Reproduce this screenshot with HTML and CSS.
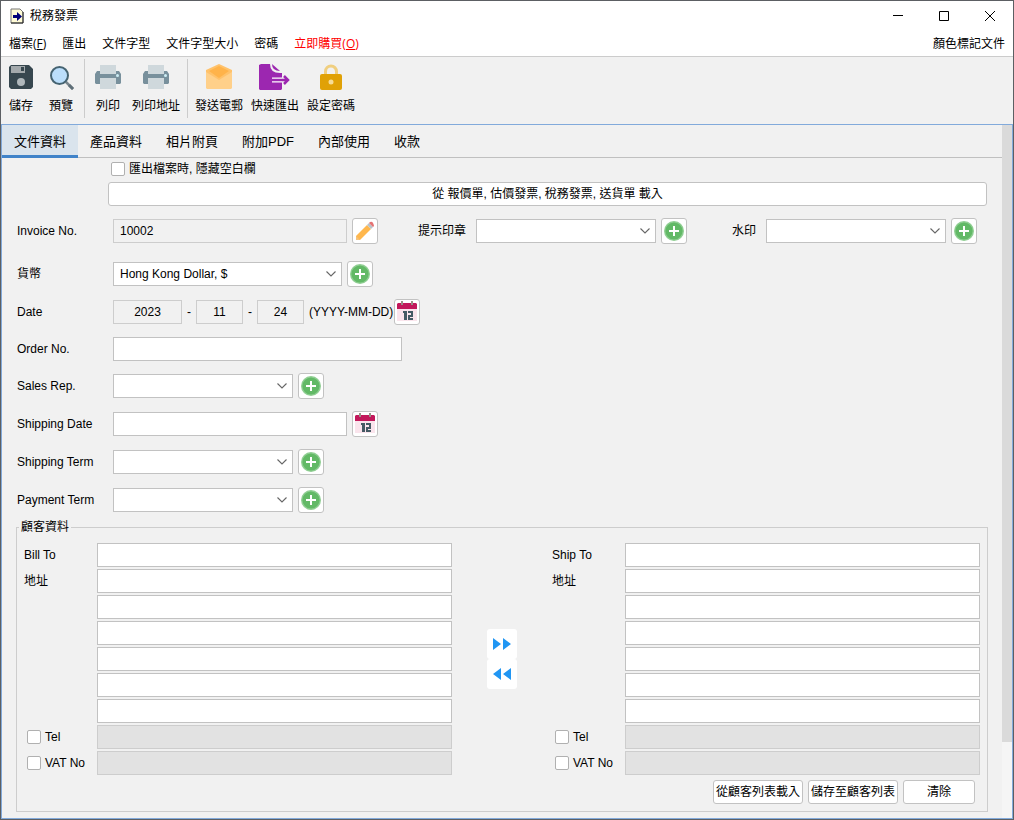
FILE: index.html
```html
<!DOCTYPE html>
<html lang="zh-Hant">
<head>
<meta charset="utf-8">
<title>稅務發票</title>
<link rel="stylesheet" href="styles.css">
</head>
<body>
<svg class="symbols" aria-hidden="true">
  <symbol id="plus" viewBox="0 0 22 22">
    <circle cx="11" cy="11" r="10" fill="#8fce92"/>
    <circle cx="11" cy="11" r="8.6" fill="#62b966"/>
    <path d="M11 6v10M6 11h10" stroke="#fff" stroke-width="2"/>
  </symbol>
  <symbol id="chevron" viewBox="0 0 12 8">
    <path d="M1.5 1.5 6 6l4.500-4.500" fill="none" stroke="#666" stroke-width="1.100"/>
  </symbol>
  <symbol id="calendar" viewBox="0 0 22 22">
    <path d="M1 7h20v13H1z" fill="#fae4ec"/>
    <path d="M2 2h18l1 1v5H1V3z" fill="#c2185b"/>
    <path d="M5 0h2v4H5zM15 0h2v4h-2z" fill="#9a9189"/>
    <path d="M7 10h4v9H8v-7H7zM12 10h5v6h-3v1h3v2h-5v-5h3v-2h-3z" fill="#455a64"/>
  </symbol>
  <symbol id="printer" viewBox="0 0 28 28">
    <path d="M6 2h16v9H6z" fill="#cfd8dc"/>
    <path d="M3 8h3v3h16V8h3l2 3v9l-1 1H2l-1-1v-9z" fill="#78909c"/>
    <path d="M6 15h16v11H6z" fill="#cfd8dc"/>
    <circle cx="23.500" cy="12.500" r="1.500" fill="#cdeef5"/>
  </symbol>
</svg>

<div class="window">
  <header class="titlebar">
    <svg class="app-icon" viewBox="0 0 14 16" aria-hidden="true">
      <path d="M1 1h9l3 3v11H1z" fill="#fffbd6" stroke="#777" stroke-width="1"/>
      <path d="M13 4v11H1" fill="none" stroke="#222" stroke-width="1"/>
      <path d="M3 7h4V4l5 4.500L7 13v-3H3z" fill="#00007a"/>
    </svg>
    <h1 class="title">稅務發票</h1>
    <div class="controls">
      <button class="control" aria-label="最小化"><svg viewBox="0 0 12 12"><path d="M1 5.500h10"/></svg></button>
      <button class="control" aria-label="最大化"><svg viewBox="0 0 12 12"><path d="M1.500 1.500h9v9h-9z"/></svg></button>
      <button class="control" aria-label="關閉"><svg viewBox="0 0 12 12"><path d="M1 1l10 10M11 1 1 11"/></svg></button>
    </div>
  </header>

  <nav class="menubar">
    <button class="menu">檔案(<u>F</u>)</button>
    <button class="menu">匯出</button>
    <button class="menu">文件字型</button>
    <button class="menu">文件字型大小</button>
    <button class="menu">密碼</button>
    <button class="menu menu-buy">立即購買(<u>O</u>)</button>
    <button class="menu menu-end">顏色標記文件</button>
  </nav>

  <div class="toolbar">
    <div class="tools tools-file">
      <button class="tool"><svg viewBox="0 0 28 28" aria-hidden="true"><path d="M4 2h18l4 4v18l-2 2H4l-2-2V4z" fill="#37474f"/><path d="M4 3h14v7H4z" fill="#a3a9ac"/><path d="M14 4h3v4h-3z" fill="#37474f"/><circle cx="14" cy="19" r="4" fill="#b0b8bc"/></svg>儲存</button>
      <button class="tool"><svg viewBox="0 0 28 28" aria-hidden="true"><path d="m19 19 7 7" stroke="#78858c" stroke-width="2.500"/><path d="m22 22 4 4" stroke="#5f6f78" stroke-width="3"/><circle cx="12.500" cy="12.500" r="8.500" fill="#bbdefb" stroke="#456371" stroke-width="2"/></svg>預覽</button>
    </div>
    <div class="tools tools-print">
      <button class="tool"><svg aria-hidden="true"><use href="#printer"/></svg>列印</button>
      <button class="tool"><svg aria-hidden="true"><use href="#printer"/></svg>列印地址</button>
    </div>
    <div class="tools tools-send">
      <button class="tool"><svg viewBox="0 0 28 28" aria-hidden="true"><path d="M1 8h26v17l-1 1H2l-1-1z" fill="#ffd08a"/><path d="M1 7 14 1l13 6v2l-13 8L1 9z" fill="#ffc26b"/><path d="M4 8 14 3l10 5-10 7z" fill="#ffb34a"/></svg>發送電郵</button>
      <button class="tool"><svg class="wide" viewBox="0 0 32 28" aria-hidden="true"><path d="M2 1h9q0 9 10 9h2v16l-1 1H1l-1-1V2z" fill="#9c27b0"/><path d="M13 1l8 7q-8 0-8-7z" fill="#9c27b0"/><path d="M13 17h10" stroke="#fff" stroke-width="5"/><path d="M13 17h16M25 13l4 4-4 4" fill="none" stroke="#9c27b0" stroke-width="2.500"/></svg>快速匯出</button>
      <button class="tool"><svg viewBox="0 0 28 28" aria-hidden="true"><path d="M8.500 12V8.500a5.500 5.500 0 0 1 11 0V12" fill="none" stroke="#f0cf80" stroke-width="3"/><rect x="3" y="11" width="22" height="16" rx="2" fill="#e0a106"/><circle cx="14" cy="19" r="2.500" fill="#f6dc97"/></svg>設定密碼</button>
    </div>
  </div>

  <div class="body">
    <main class="page">
      <div class="tabs" role="tablist">
        <button class="tab tab-on" role="tab" aria-selected="true">文件資料</button>
        <button class="tab" role="tab">產品資料</button>
        <button class="tab" role="tab">相片附頁</button>
        <button class="tab" role="tab">附加PDF</button>
        <button class="tab" role="tab">內部使用</button>
        <button class="tab" role="tab">收款</button>
      </div>

      <form class="form">
        <label class="check hide-blank"><input type="checkbox" class="box">匯出檔案時, 隱藏空白欄</label>
        <button type="button" class="button load">從 報價單, 估價發票, 稅務發票, 送貨單 載入</button>

        <div class="rows">
          <div class="row row-first">
            <label class="name" for="invoice">Invoice No.</label>
            <input class="field w-date locked" id="invoice" value="10002" readonly>
            <button type="button" class="mini" aria-label="編輯"><svg viewBox="0 0 22 22"><path d="m2 16 11-11 4 4L6 20H2z" fill="#ffb74d"/><path d="m2 16 4 4H2z" fill="#f5c27a"/><path d="m13 5 2-2 4 4-2 2z" fill="#b9c3c9"/><path d="m15 3 1-1q2-1 3 1t1 3l-1 1z" fill="#e57373"/></svg></button>
            <label class="side" for="stamp">提示印章</label>
            <span class="pick w-pick"><select class="field" id="stamp"><option></option></select><svg><use href="#chevron"/></svg></span>
            <button type="button" class="mini" aria-label="新增"><svg><use href="#plus"/></svg></button>
            <label class="side" for="mark">水印</label>
            <span class="pick w-pick"><select class="field" id="mark"><option></option></select><svg><use href="#chevron"/></svg></span>
            <button type="button" class="mini" aria-label="新增"><svg><use href="#plus"/></svg></button>
          </div>
          <div class="row">
            <label class="name" for="currency">貨幣</label>
            <span class="pick w-currency"><select class="field" id="currency"><option>Hong Kong Dollar, $</option></select><svg><use href="#chevron"/></svg></span>
            <button type="button" class="mini" aria-label="新增"><svg><use href="#plus"/></svg></button>
          </div>
          <div class="row">
            <label class="name" for="year">Date</label>
            <input class="field w-year locked" id="year" value="2023" readonly>
            <span>-</span>
            <input class="field w-day locked" aria-label="Month" value="11" readonly>
            <span>-</span>
            <input class="field w-day locked" aria-label="Day" value="24" readonly>
            <span class="hint">(YYYY-MM-DD)</span>
            <button type="button" class="mini" aria-label="日曆"><svg><use href="#calendar"/></svg></button>
          </div>
          <div class="row row-plain">
            <label class="name" for="order">Order No.</label>
            <input class="field w-order" id="order">
          </div>
          <div class="row">
            <label class="name" for="rep">Sales Rep.</label>
            <span class="pick w-pick"><select class="field" id="rep"><option></option></select><svg><use href="#chevron"/></svg></span>
            <button type="button" class="mini" aria-label="新增"><svg><use href="#plus"/></svg></button>
          </div>
          <div class="row">
            <label class="name" for="shipdate">Shipping Date</label>
            <input class="field w-date" id="shipdate">
            <button type="button" class="mini" aria-label="日曆"><svg><use href="#calendar"/></svg></button>
          </div>
          <div class="row">
            <label class="name" for="shipterm">Shipping Term</label>
            <span class="pick w-pick"><select class="field" id="shipterm"><option></option></select><svg><use href="#chevron"/></svg></span>
            <button type="button" class="mini" aria-label="新增"><svg><use href="#plus"/></svg></button>
          </div>
          <div class="row">
            <label class="name" for="payterm">Payment Term</label>
            <span class="pick w-pick"><select class="field" id="payterm"><option></option></select><svg><use href="#chevron"/></svg></span>
            <button type="button" class="mini" aria-label="新增"><svg><use href="#plus"/></svg></button>
          </div>
        </div>

        <fieldset class="customer">
          <legend>顧客資料</legend>
          <div class="parties">
            <div class="party">
              <label for="bill">Bill To</label><input class="field" id="bill">
              <label for="bill-address">地址</label><input class="field" id="bill-address">
              <input class="field more" aria-label="地址 2">
              <input class="field more" aria-label="地址 3">
              <input class="field more" aria-label="地址 4">
              <input class="field more" aria-label="地址 5">
              <input class="field more" aria-label="地址 6">
              <label class="check"><input type="checkbox" class="box">Tel</label><input class="field" aria-label="Tel" disabled>
              <label class="check"><input type="checkbox" class="box">VAT No</label><input class="field" aria-label="VAT No" disabled>
            </div>
            <div class="copy">
              <button type="button" class="arrow" aria-label="複製至 Ship To"><svg viewBox="0 0 20 14"><path d="M1 1v12l8-6zM11 1v12l8-6z"/></svg></button>
              <button type="button" class="arrow" aria-label="複製至 Bill To"><svg viewBox="0 0 20 14"><path d="M9 1v12L1 7zM19 1v12l-8-6z"/></svg></button>
            </div>
            <div class="party">
              <label for="ship">Ship To</label><input class="field" id="ship">
              <label for="ship-address">地址</label><input class="field" id="ship-address">
              <input class="field more" aria-label="地址 2">
              <input class="field more" aria-label="地址 3">
              <input class="field more" aria-label="地址 4">
              <input class="field more" aria-label="地址 5">
              <input class="field more" aria-label="地址 6">
              <label class="check"><input type="checkbox" class="box">Tel</label><input class="field" aria-label="Tel" disabled>
              <label class="check"><input type="checkbox" class="box">VAT No</label><input class="field" aria-label="VAT No" disabled>
            </div>
          </div>
          <div class="actions">
            <button type="button" class="button wide-action">從顧客列表載入</button>
            <button type="button" class="button wide-action">儲存至顧客列表</button>
            <button type="button" class="button clear">清除</button>
          </div>
        </fieldset>
      </form>
    </main>
    <div class="scroll"><div class="thumb"></div></div>
  </div>
</div>
</body>
</html>
```

FILE: styles.css
```css
* { box-sizing: border-box; }

body {
  margin: 0;
  background: #f1f1f1;
  color: #000;
  font: 12px/16px "Liberation Sans", "Noto Sans CJK TC", sans-serif;
}

button, input, select {
  margin: 0;
  padding: 0;
  border: 0;
  background: none;
  color: inherit;
  font: inherit;
}

button { white-space: nowrap; }

.symbols { display: none; }

.window {
  display: flex;
  flex-direction: column;
  min-height: 100vh;
  border: 1px solid #5c5f63;
}

/* Title bar and menu */
.titlebar {
  display: flex;
  align-items: center;
  height: 29px;
  padding-left: 9px;
  background: #fff;
}
.app-icon { width: 14px; height: 16px; }
.title {
  flex: 1;
  margin: 0 0 0 6px;
  font-size: 12px;
  font-weight: 400;
}
.controls { display: flex; }
.control { width: 46px; height: 29px; }
.control svg {
  display: block;
  width: 12px;
  height: 12px;
  margin: auto;
  fill: none;
  stroke: #000;
  stroke-width: 1;
}

.menubar {
  display: flex;
  align-items: center;
  gap: 16px;
  height: 27px;
  padding: 2px 8px 0;
  border-bottom: 1px solid #ccc;
  background: #fff;
  font-family: "Open Sans", "Noto Sans CJK TC", sans-serif;
}
.menu-buy { color: #f00; }
.menu-end { margin-left: auto; }

/* Toolbar */
.toolbar {
  display: flex;
  height: 67px;
  padding: 2px 0 6px;
}
.tools { display: flex; }
.tools-file {
  gap: 16px;
  padding: 0 11px 0 8px;
  border-right: 1px solid #ccc;
}
.tools-print {
  gap: 12px;
  padding: 0 7px 0 11px;
  border-right: 1px solid #ccc;
}
.tools-send {
  gap: 8px;
  padding-left: 7px;
}
.tool {
  display: flex;
  flex-direction: column;
  align-items: center;
  gap: 7px;
  padding-top: 4px;
}
.tools-file .tool { width: 24px; }
.tools-print .tool:first-child { width: 24px; }
.tool svg { flex: none; width: 28px; height: 28px; }
.tool .wide { width: 32px; }

/* Document area */
.body {
  display: flex;
  flex: 1;
  border: 1px solid #82aadb;
}
.page { flex: 1; min-width: 0; }
.scroll { width: 10px; background: #f5f5f5; }
.thumb { height: 89%; background: #dadada; }

.tabs {
  display: flex;
  height: 33px;
  border-bottom: 1px solid #c0c0c0;
}
.tab {
  height: 33px;
  padding: 3px 12px 0;
  border-bottom: 3px solid transparent;
  font-size: 13px;
}
.tab-on {
  border-color: #4083c9;
  background: #dae4ed;
}

.form {
  display: flex;
  flex-direction: column;
  padding: 0 14px 6px;
}

.check {
  display: flex;
  align-items: center;
  gap: 4px;
}
.box {
  flex: none;
  width: 14px;
  height: 14px;
  border: 1px solid #b0b0b0;
  border-radius: 2px;
  background: #fff;
  appearance: none;
}
.hide-blank {
  align-self: flex-start;
  height: 24px;
  margin-left: 95px;
  padding-bottom: 2px;
}

.button {
  height: 24px;
  border: 1px solid #c2c2c2;
  border-radius: 3px;
  background: #fff;
}
.load { margin: 0 1px 12px 92px; }

.rows {
  display: flex;
  flex-direction: column;
  gap: 12px;
}
.row {
  display: flex;
  align-items: center;
  gap: 5px;
  min-height: 26px;
}
.row-first { margin-bottom: 5px; }
.row-plain { min-height: 24px; }
.name { width: 92px; padding-left: 1px; }
.side { margin: 0 5px 0 35px; }
.side:nth-of-type(3) { margin-left: 40px; }
.hint { width: 80px; white-space: nowrap; }

.field {
  width: 100%;
  height: 24px;
  padding: 0 6px;
  border: 1px solid #c2c2c2;
  border-radius: 0;
  background: #fff;
  appearance: none;
}
.field:disabled {
  border-color: #cdcdcd;
  background: #e2e2e2;
}
.field.locked {
  border-color: #cdcdcd;
  background: #f1f1f1;
}
.field.w-date { width: 234px; }
.field.w-order { width: 289px; }
.field.w-year { width: 69px; text-align: center; }
.field.w-day { width: 47px; text-align: center; }

.pick { display: grid; align-items: center; }
.pick > * { grid-area: 1 / 1; }
.pick svg {
  justify-self: end;
  width: 12px;
  height: 8px;
  margin-right: 5px;
  pointer-events: none;
}
.w-pick { width: 180px; }
.w-currency { width: 229px; }

.mini {
  display: grid;
  place-items: center;
  flex: none;
  width: 26px;
  height: 26px;
  border: 1px solid #c2c2c2;
  border-radius: 3px;
  background: #fff;
}
.mini svg { width: 22px; height: 22px; }

/* Customer */
.customer {
  min-width: 0;
  margin: 7px 0 0;
  padding: 9px 7px 7px;
  border: 1px solid #cdcdcd;
}
.customer legend {
  margin-left: -5px;
  padding: 0 2px;
  line-height: 14px;
}
.parties {
  display: grid;
  grid-template-columns: 1fr 100px 1fr;
}
.party {
  display: grid;
  grid-template-columns: 73px 1fr;
  row-gap: 2px;
  align-items: center;
}
.party .more { grid-column: 2; }
.party .check { padding-left: 3px; }
.copy {
  align-self: center;
  justify-self: center;
  display: grid;
}
.arrow {
  display: grid;
  place-items: center;
  width: 30px;
  height: 30px;
  border-radius: 3px;
  background: #fff;
}
.arrow svg { width: 20px; height: 14px; fill: #2196f3; }

.actions {
  display: flex;
  justify-content: flex-end;
  gap: 5px;
  padding: 5px 5px 0 0;
}
.wide-action { width: 90px; }
.clear { width: 72px; }
```
